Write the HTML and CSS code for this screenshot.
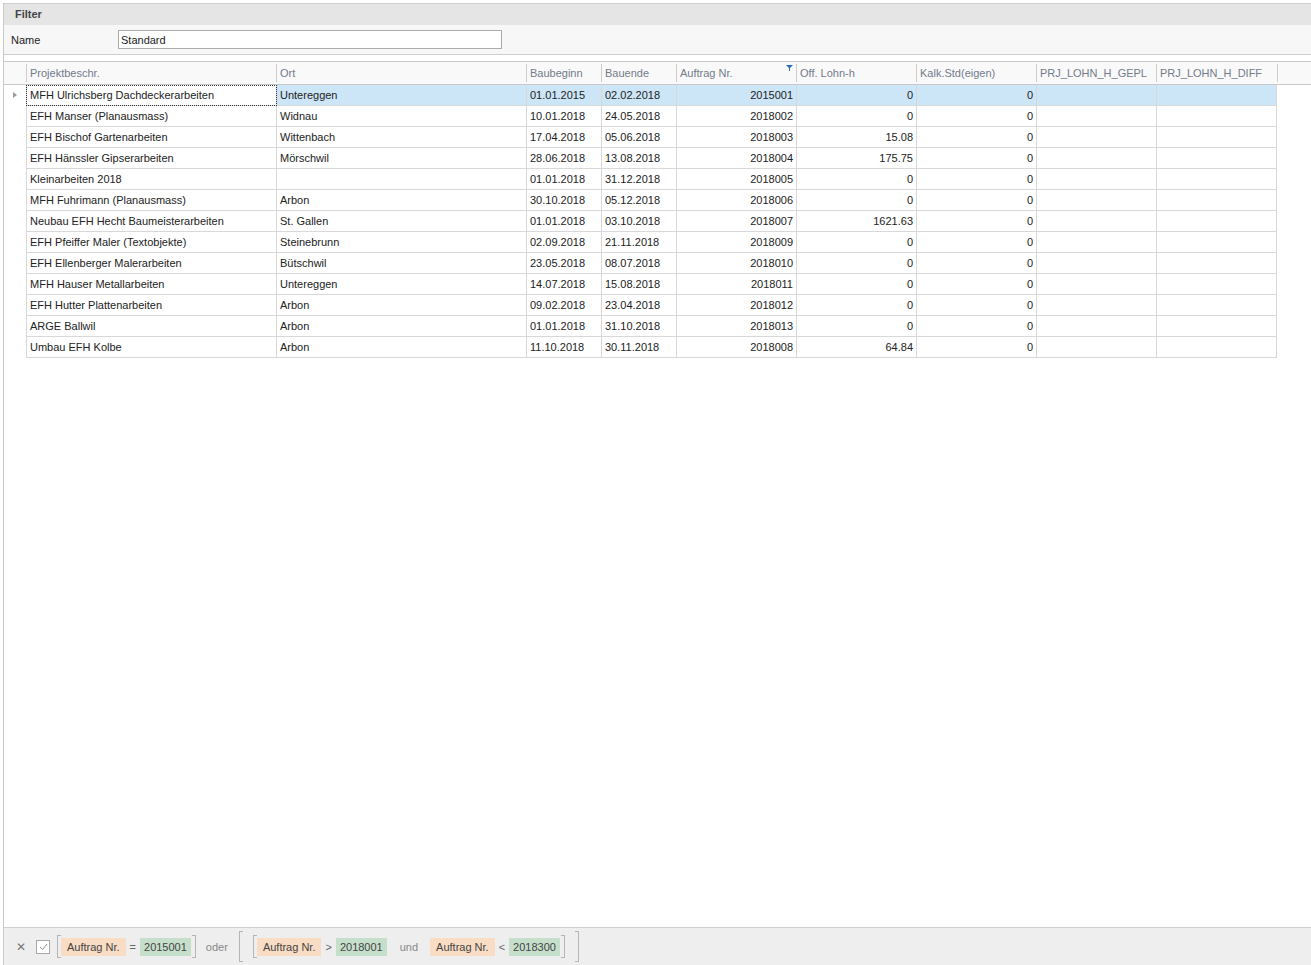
FILE: index.html
```html
<!DOCTYPE html>
<html lang="de">
<head>
    <meta charset="UTF-8">
    <title>Projekte</title>
    <link rel="stylesheet" href="styles.css">
</head>
<body>
    <div class="frame">
        <div class="filter-panel">
            <div class="filter-title">Filter</div>
            <div class="filter-body">
                <span class="filter-label">Name</span>
                <input class="filter-input" type="text" value="Standard">
            </div>
        </div>

        <div class="grid">
            <div class="row head">
                <div class="cell ind"></div>
                <div class="cell">Projektbeschr.</div>
                <div class="cell">Ort</div>
                <div class="cell">Baubeginn</div>
                <div class="cell">Bauende</div>
                <div class="cell">Auftrag Nr.
                    <svg class="funnel" width="7" height="6" viewBox="0 0 7 6"><path d="M0 0H7L4 3V6H3V3Z" fill="#2b6cc4"/></svg>
                </div>
                <div class="cell">Off. Lohn-h</div>
                <div class="cell">Kalk.Std(eigen)</div>
                <div class="cell">PRJ_LOHN_H_GEPL</div>
                <div class="cell">PRJ_LOHN_H_DIFF</div>
                <div class="cell"></div>
            </div>
            <div id="rows"></div>
            <div class="grid-empty"></div>

            <div class="filter-bar">
                <span class="close">&#x2715;</span>
                <span class="check"><svg width="9" height="8" viewBox="0 0 9 8"><path d="M1 4L3.5 6.5L8 1" fill="none" stroke="#8a8a8a" stroke-width="1"/></svg></span>
                <span class="bracket open"></span>
                <span class="tag field">Auftrag Nr.</span>
                <span class="op">=</span>
                <span class="tag value">2015001</span>
                <span class="bracket close-b"></span>
                <span class="word">oder</span>
                <span class="bracket open big"></span>
                <span class="bracket open"></span>
                <span class="tag field">Auftrag Nr.</span>
                <span class="op">&gt;</span>
                <span class="tag value">2018001</span>
                <span class="word und">und</span>
                <span class="tag field">Auftrag Nr.</span>
                <span class="op">&lt;</span>
                <span class="tag value">2018300</span>
                <span class="bracket close-b"></span>
                <span class="bracket close-b big"></span>
            </div>
        </div>
    </div>

    <script>
        const projects = [
            ["MFH Ulrichsberg Dachdeckerarbeiten", "Untereggen", "01.01.2015", "02.02.2018", "2015001", "0", "0"],
            ["EFH Manser (Planausmass)", "Widnau", "10.01.2018", "24.05.2018", "2018002", "0", "0"],
            ["EFH Bischof Gartenarbeiten", "Wittenbach", "17.04.2018", "05.06.2018", "2018003", "15.08", "0"],
            ["EFH Hänssler Gipserarbeiten", "Mörschwil", "28.06.2018", "13.08.2018", "2018004", "175.75", "0"],
            ["Kleinarbeiten 2018", "", "01.01.2018", "31.12.2018", "2018005", "0", "0"],
            ["MFH Fuhrimann (Planausmass)", "Arbon", "30.10.2018", "05.12.2018", "2018006", "0", "0"],
            ["Neubau EFH Hecht Baumeisterarbeiten", "St. Gallen", "01.01.2018", "03.10.2018", "2018007", "1621.63", "0"],
            ["EFH Pfeiffer Maler (Textobjekte)", "Steinebrunn", "02.09.2018", "21.11.2018", "2018009", "0", "0"],
            ["EFH Ellenberger Malerarbeiten", "Bütschwil", "23.05.2018", "08.07.2018", "2018010", "0", "0"],
            ["MFH Hauser Metallarbeiten", "Untereggen", "14.07.2018", "15.08.2018", "2018011", "0", "0"],
            ["EFH Hutter Plattenarbeiten", "Arbon", "09.02.2018", "23.04.2018", "2018012", "0", "0"],
            ["ARGE Ballwil", "Arbon", "01.01.2018", "31.10.2018", "2018013", "0", "0"],
            ["Umbau EFH Kolbe", "Arbon", "11.10.2018", "30.11.2018", "2018008", "64.84", "0"]
        ];

        const rows = document.getElementById('rows');
        projects.forEach((p, i) => {
            const row = document.createElement('div');
            row.className = i === 0 ? 'row data selected' : 'row data';
            let html = '<div class="cell ind">' + (i === 0 ? '<span class="arrow"></span>' : '') + '</div>';
            p.forEach((v, c) => {
                let cls = c >= 4 ? 'cell num' : 'cell';
                if (c === 0) cls += ' first';
                if (c === 0 && i === 0) cls += ' focus';
                html += '<div class="' + cls + '">' + v + '</div>';
            });
            html += '<div class="cell"></div><div class="cell"></div>';
            row.innerHTML = html;
            rows.appendChild(row);
        });
    </script>
</body>
</html>
```

FILE: styles.css
```css
body {
    margin: 0;
    font-family: "Liberation Sans", Arial, sans-serif;
    font-size: 11px;
    color: #222;
    background: #fff;
}
.frame {
    margin: 3px 0 0 3px;
    border-left: 1px solid #c8c8c8;
    height: 962px;
    display: flex;
    flex-direction: column;
}
.filter-panel {
    border-top: 1px solid #cfcfcf;
    border-bottom: 1px solid #cfcfcf;
}
.filter-title {
    height: 21px;
    line-height: 20px;
    padding-left: 11px;
    font-weight: bold;
    color: #444;
    background: #e5e5e5;
}
.filter-body {
    height: 29px;
    display: flex;
    align-items: center;
    background: #f7f7f7;
}
.filter-label {
    width: 107px;
    padding-left: 7px;
}
.filter-input {
    width: 378px;
    height: 17px;
    margin: 0;
    padding: 0 2px;
    border: 1px solid #ababab;
    font: inherit;
    color: #222;
    background: #fff;
}
.grid {
    margin-top: 6px;
    border-top: 1px solid #c8c8c8;
    flex: 1;
    display: flex;
    flex-direction: column;
}
.row {
    display: grid;
    grid-template-columns: 22px 250px 250px 75px 75px 120px 120px 120px 120px 121px 1fr;
}
.row.head {
    height: 22px;
    border-bottom: 1px solid #c8c8c8;
    background: #f9f9f9;
}
.head .cell {
    position: relative;
    padding-left: 3px;
    color: #737b8c;
    border-left: 1px solid #cdcdcd;
    margin: 2px 0;
    line-height: 18px;
}
.head .cell.ind {
    border-left: none;
}
.funnel {
    position: absolute;
    right: 3px;
    top: 1px;
}
.row.data {
    height: 21px;
    grid-template-columns: 22px 251px 250px 75px 75px 120px 120px 120px 120px 120px;
}
.data .cell {
    height: 20px;
    line-height: 20px;
    padding: 0 3px;
    border-right: 1px solid #d8d8d8;
    border-bottom: 1px solid #d8d8d8;
    white-space: nowrap;
    overflow: hidden;
}
.data .cell.first {
    border-left: 1px solid #d8d8d8;
}
.data .cell.ind {
    border-right: none;
    border-bottom: none;
    position: relative;
}
.data .cell.num {
    text-align: right;
}
.selected .cell {
    background: #cde6f7;
}
.selected .cell.ind {
    background: none;
}
.selected .cell.focus {
    background: #fff;
    outline: 1px dotted #333;
    outline-offset: -1px;
}
.arrow {
    position: absolute;
    left: 9px;
    top: 7px;
    border-left: 4px solid #9a9a9a;
    border-top: 3px solid transparent;
    border-bottom: 3px solid transparent;
}
.grid-empty {
    flex: 1;
}
.filter-bar {
    height: 37px;
    border-top: 1px solid #d0d0d0;
    background: #eeeeee;
    display: flex;
    align-items: center;
    padding-left: 12px;
    color: #555;
}
.close {
    font-size: 12px;
    color: #777;
    margin-right: 10px;
}
.check {
    width: 12px;
    height: 12px;
    border: 1px solid #a8a8a8;
    background: #fff;
    display: flex;
    align-items: center;
    justify-content: center;
    margin-right: 7px;
}
.bracket {
    width: 3px;
    height: 21px;
    border-top: 1px solid #b5b5b5;
    border-bottom: 1px solid #b5b5b5;
}
.bracket.open {
    border-left: 1px solid #b5b5b5;
}
.bracket.close-b {
    border-right: 1px solid #b5b5b5;
    margin-left: 1px;
}
.bracket.big {
    height: 29px;
}
.bracket.open.big {
    margin-right: 10px;
}
.bracket.close-b.big {
    margin-left: 10px;
}
.tag {
    height: 18px;
    line-height: 18px;
    color: #444;
}
.tag.field {
    padding: 0 6px;
    background: #f9dcc4;
}
.tag.value {
    padding: 0 4px;
    background: #c6dfcb;
}
.op {
    margin: 0 4px;
    color: #666;
}
.word {
    margin: 0 11px 0 10px;
    color: #888;
}
.word.und {
    margin-left: 13px;
    margin-right: 12px;
}
```
